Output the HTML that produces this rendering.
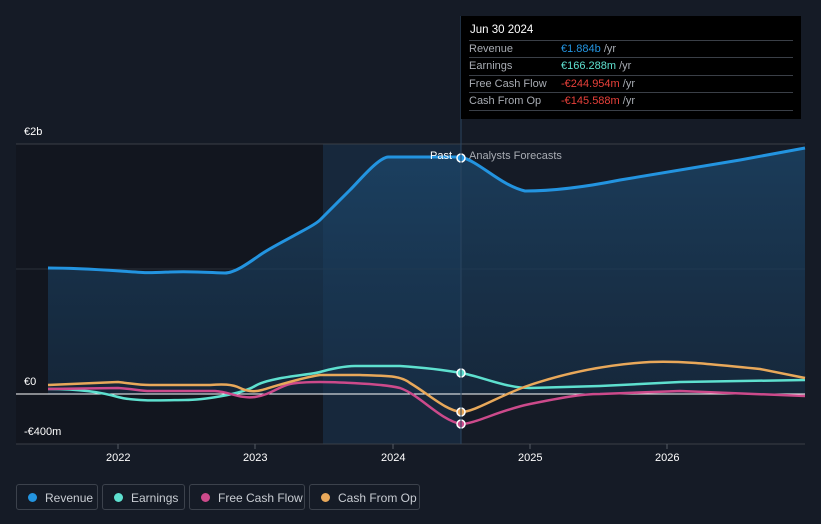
<!DOCTYPE html>
<html><head><meta charset="utf-8"><style>
body{margin:0;background:#151b26;font-family:"Liberation Sans",sans-serif;}
.wrap{position:relative;width:821px;height:524px;overflow:hidden;background:#151b26}
.tt{position:absolute;left:461px;top:16px;width:340px;height:103px;background:#000;color:#fff;font-size:11px}
.tt .h{position:absolute;left:9px;top:8px;font-size:11.5px}
.row{position:absolute;left:8px;width:324px;border-top:1px solid #3a3f47;height:17px;line-height:17px;color:#a8acb3}
.row b{font-weight:normal;position:absolute;left:92px}
.leg{position:absolute;top:484px;height:26px;border:1px solid #3c424c;border-radius:3px;color:#c8ccd2;font-size:12px;line-height:26px;box-sizing:border-box}
.leg i{position:absolute;left:11px;top:8px;width:9px;height:9px;border-radius:50%}
.leg span{position:absolute;left:28px}
.ax{position:absolute;color:#fff;font-size:11px}
</style></head><body><div class="wrap">
<svg width="821" height="524" style="position:absolute;left:0;top:0">
<defs><linearGradient id="g" x1="0" y1="0" x2="0" y2="1"><stop offset="0" stop-color="#1d4a70" stop-opacity=".7"/><stop offset="1" stop-color="#173049" stop-opacity=".6"/></linearGradient></defs>
<rect x="16" y="144" width="307" height="300" fill="#12161f"/>
<rect x="323" y="144" width="138" height="300" fill="#17283c"/>
<line x1="16" y1="144" x2="805" y2="144" stroke="#3a3f47"/>
<line x1="16" y1="269" x2="805" y2="269" stroke="#2a303a"/>
<path d="M48,268 C70,268 90,269 120,271 S145,273 170,272 S215,273 225,273 S250,262 260,255 S290,238 295,235 S315,225 320,220 S340,200 350,190 S378,158 388,157 L461,157 C480,162 500,185 525,191 C560,191 600,184 620,180 L740,160 L805,148 L805,394 L48,394Z" fill="url(#g)"/>
<path d="M48,268 C70,268 90,269 120,271 S145,273 170,272 S215,273 225,273 S250,262 260,255 S290,238 295,235 S315,225 320,220 S340,200 350,190 S378,158 388,157 L461,157 C480,162 500,185 525,191 C560,191 600,184 620,180 L740,160 L805,148" fill="none" stroke="#2394e0" stroke-width="3"/>
<line x1="16" y1="394" x2="805" y2="394" stroke="#fff" stroke-width="1"/>
<line x1="16" y1="444" x2="805" y2="444" stroke="#3a3f47"/>
<g fill="none" stroke-width="2.5" stroke-linejoin="round">
<path d="M48,389 C80,389 100,392 118,397 S170,400 185,400 S240,395 255,386 S310,375 320,372 S345,366 355,366 L400,366 C430,368 450,371 461,373 C480,376 505,388 530,388 L600,386 L680,382 L805,380" stroke="#5ee0cf"/>
<path d="M48,389 L118,388 C135,389 140,391 150,391 L215,391 C230,392 240,399 255,397 S280,386 290,384 S315,382 320,382 S380,383 400,388 C420,395 440,420 461,424 C475,424 500,410 530,404 C560,398 580,394 600,394 L680,391 L805,396" stroke="#cc4a8b"/>
<path d="M48,385 L118,382 C135,384 140,385 150,385 L210,385 C222,384 232,384 240,388 S255,392 262,390 S300,378 320,375 L360,375 C385,376 400,375 410,383 C430,395 445,410 461,412 C475,412 500,395 530,385 C560,375 600,365 650,362 C680,361 700,363 760,369 L805,378" stroke="#e8a85a"/>
</g>
<circle cx="461" cy="158" r="4" fill="#2394e0" stroke="#fff" stroke-width="1.5"/>
<circle cx="461" cy="373" r="4" fill="#5ee0cf" stroke="#fff" stroke-width="1.5"/>
<circle cx="461" cy="412" r="4" fill="#e8a85a" stroke="#fff" stroke-width="1.5"/>
<circle cx="461" cy="424" r="4" fill="#cc4a8b" stroke="#fff" stroke-width="1.5"/>
<line x1="461" y1="16" x2="461" y2="444" stroke="#2a4560" stroke-width="1"/>
<g stroke="#555b64"><line x1="118" y1="444" x2="118" y2="449"/><line x1="255" y1="444" x2="255" y2="449"/><line x1="393" y1="444" x2="393" y2="449"/><line x1="530" y1="444" x2="530" y2="449"/><line x1="667" y1="444" x2="667" y2="449"/></g>
</svg>
<div class="ax" style="left:24px;top:126px">€2b</div>
<div class="ax" style="left:24px;top:376px">€0</div>
<div class="ax" style="left:24px;top:426px">-€400m</div>
<div class="ax" style="left:106px;top:452px">2022</div>
<div class="ax" style="left:243px;top:452px">2023</div>
<div class="ax" style="left:381px;top:452px">2024</div>
<div class="ax" style="left:518px;top:452px">2025</div>
<div class="ax" style="left:655px;top:452px">2026</div>
<div class="ax" style="left:430px;top:150px">Past</div>
<div class="ax" style="left:469px;top:150px;color:#a8acb3">Analysts Forecasts</div>
<div class="tt"><div class="h">Jun 30 2024</div>
<div class="row" style="top:24px">Revenue<b><span style="color:#2394e0">€1.884b</span> /yr</b></div>
<div class="row" style="top:41px">Earnings<b><span style="color:#5ee0cf">€166.288m</span> /yr</b></div>
<div class="row" style="top:59px">Free Cash Flow<b><span style="color:#e8403a">-€244.954m</span> /yr</b></div>
<div class="row" style="top:76px">Cash From Op<b><span style="color:#e8403a">-€145.588m</span> /yr</b></div>
<div class="row" style="top:94px;height:0"></div>
</div>
<div class="leg" style="left:16px;width:82px"><i style="background:#2394e0"></i><span>Revenue</span></div>
<div class="leg" style="left:102px;width:83px"><i style="background:#5ee0cf"></i><span>Earnings</span></div>
<div class="leg" style="left:189px;width:116px"><i style="background:#cc4a8b"></i><span>Free Cash Flow</span></div>
<div class="leg" style="left:309px;width:111px"><i style="background:#e8a85a"></i><span>Cash From Op</span></div>
</div></body></html>
